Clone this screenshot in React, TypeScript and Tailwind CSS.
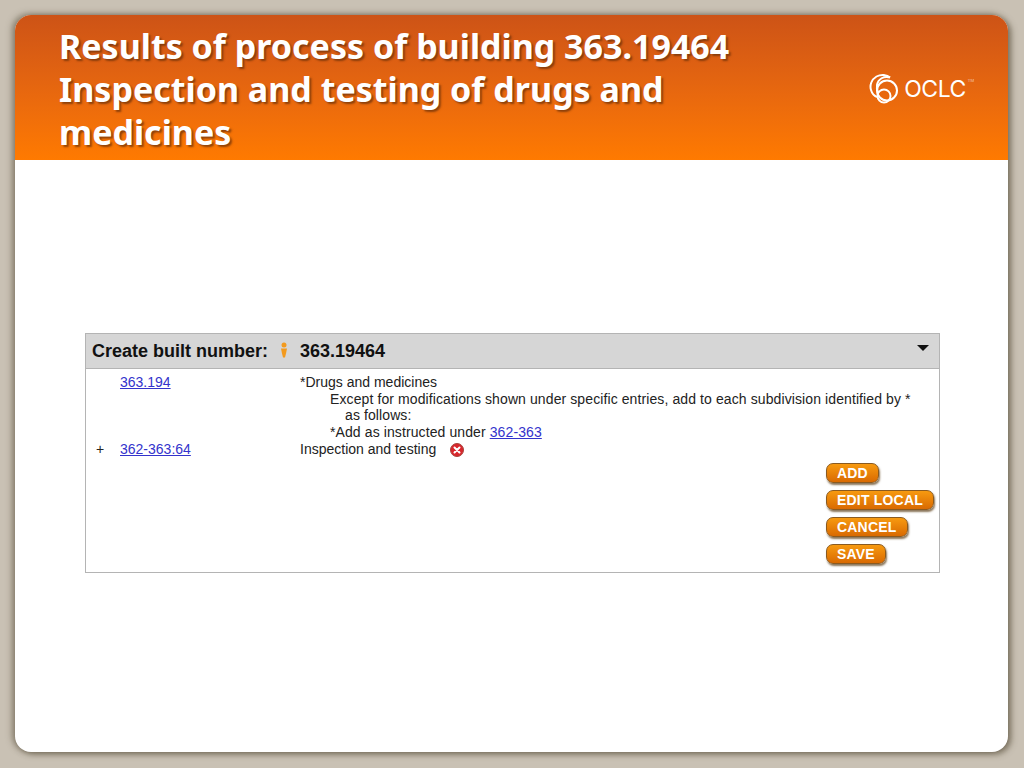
const sans = "font-['Liberation_Sans',Arial,sans-serif]";

function OclcLogo() {
  return (
    <div className="flex items-center gap-[5px] text-white">
      <svg width="30" height="32" viewBox="0 0 30 32" fill="none" stroke="currentColor" strokeWidth="2">
        <path d="M21 4.5C18 1.5 12 1 7.500 3.500C2.500 6.500 0.500 12 2 17C3 20.500 5.500 23 8 24" />
        <path d="M21 4.500C15 2.500 9 6 8 12C7.500 15 8 17 9 19" />
        <circle cx="18" cy="17.500" r="10" />
        <circle cx="15" cy="23" r="6.500" />
      </svg>
      <span className="font-['Inter',sans-serif] text-[23px] leading-none font-normal tracking-[-0.5px]">OCLC</span>
      <span className="text-[4px] self-start mt-[5px] -ml-[3px] opacity-60 font-['Inter',sans-serif]">TM</span>
    </div>
  );
}

function OrangeButton({ label }: { label: string }) {
  return (
    <button className={`h-[20px] px-[10px] rounded-[7px] border border-[#8a5a20] bg-gradient-to-b from-[#f79a10] to-[#d96a02] text-white text-[14px] leading-none font-bold tracking-[0.2px] shadow-[1px_2px_2px_rgba(90,60,20,0.7)] ${sans}`}>
      {label}
    </button>
  );
}

function ErrorIcon() {
  return (
    <svg width="16" height="16" viewBox="0 0 16 16" className="ml-[13px] mt-[1px]">
      <circle cx="8" cy="8" r="6.500" fill="#d8262c" stroke="#a8443c" strokeWidth="1" />
      <path d="M5.500 5.500L10.500 10.500M10.500 5.500L5.500 10.500" stroke="#fff" strokeWidth="2" strokeLinecap="round" />
    </svg>
  );
}

function Link({ children }: { children: string }) {
  return <a className="text-[#3333cc] underline">{children}</a>;
}

export default function App() {
  return (
    <div className="w-[1024px] h-[768px] overflow-hidden bg-[#c9c1b4] pt-[15px] pl-[15px]">
      <div className="w-[993px] h-[737px] rounded-[16px] bg-white overflow-hidden shadow-[-3px_-1px_6px_rgba(90,80,60,0.55),3px_2px_6px_rgba(90,80,60,0.7)]">
        {/* Title band */}
        <div className="h-[145px] bg-gradient-to-b from-[#cd5316] to-[#ff7a00] flex justify-between pl-[44px] pr-[34px]">
          <h1 className="w-[760px] pt-[10px] font-['Noto_Sans',sans-serif] font-bold text-[34px] leading-[43px] text-white [text-shadow:2px_2px_2px_rgba(110,50,10,0.75)]">
            Results of process of building 363.19464 Inspection and testing of drugs and medicines
          </h1>
          <div className="pt-[58px]">
            <OclcLogo />
          </div>
        </div>

        {/* Built number panel */}
        <div className={`mt-[173px] ml-[70px] w-[855px] h-[240px] border border-[#b4b4b4] text-[#222] ${sans}`}>
          <div className="h-[35px] bg-[#d6d6d6] border-b border-[#b4b4b4] flex items-center pl-[6px] pr-[10px] text-[18px] font-bold text-[#111]">
            <span>Create built number:</span>
            <svg width="10" height="16" viewBox="0 0 10 16" className="ml-[11px] mr-[11px] -mt-[2px]" fill="#f39a1e">
              <circle cx="5" cy="3" r="2.500" />
              <path d="M2 6.500H8L7 11.500L6 15.500H4L3 11.500Z" />
            </svg>
            <span>363.19464</span>
            <svg width="12" height="6" viewBox="0 0 12 6" className="ml-auto -mt-[6px]">
              <path d="M0 0H12L6 6Z" fill="#111" />
            </svg>
          </div>

          <div className="pt-[5px] text-[14px] leading-[16.700px]">
            <div className="flex">
              <div className="w-[34px]" />
              <div className="w-[180px]"><Link>363.194</Link></div>
              <div>*Drugs and medicines</div>
            </div>
            <div className="pl-[244px] pr-[4px] tracking-[0.1px]">
              <div className="whitespace-nowrap">Except for modifications shown under specific entries, add to each subdivision identified by *</div>
              <div className="pl-[15px]">as follows:</div>
              <div>*Add as instructed under <Link>362-363</Link></div>
            </div>
            <div className="flex">
              <div className="w-[34px] pl-[10px]">+</div>
              <div className="w-[180px]"><Link>362-363:64</Link></div>
              <div>Inspection and testing</div>
              <ErrorIcon />
            </div>
          </div>

          <div className="mt-[5px] ml-[740px] flex flex-col items-start gap-[7px]">
            <OrangeButton label="ADD" />
            <OrangeButton label="EDIT LOCAL" />
            <OrangeButton label="CANCEL" />
            <OrangeButton label="SAVE" />
          </div>
        </div>
      </div>
    </div>
  );
}
